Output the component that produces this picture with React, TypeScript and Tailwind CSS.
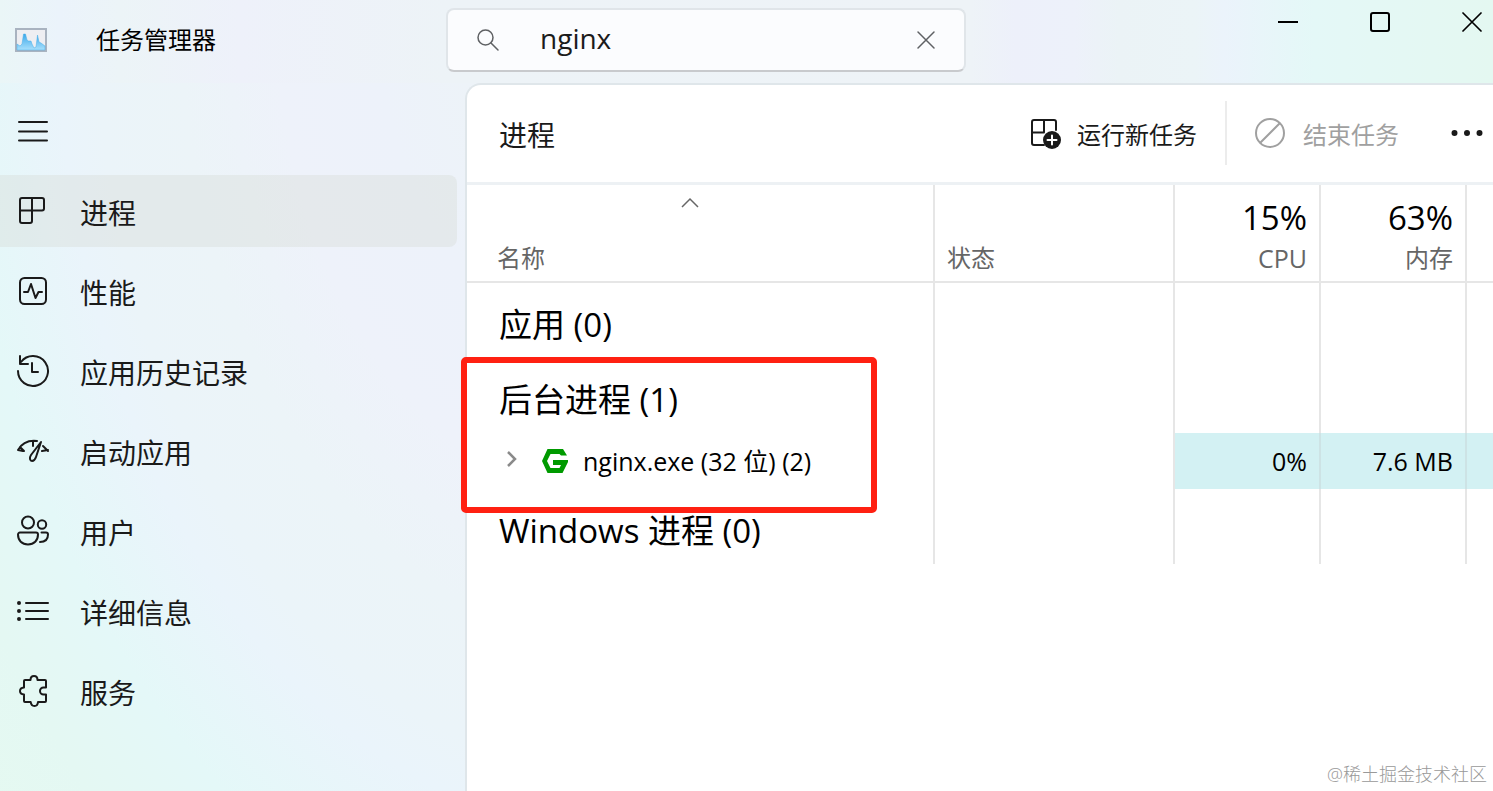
import type { ReactNode } from "react";

function Icon({
  size,
  label,
  className = "",
  children,
}: {
  size: number;
  label?: string;
  className?: string;
  children: ReactNode;
}) {
  return (
    <svg
      width={size}
      height={size}
      viewBox={`0 0 ${size} ${size}`}
      fill="none"
      stroke="currentColor"
      strokeWidth="2"
      strokeLinecap="round"
      strokeLinejoin="round"
      aria-hidden={label ? undefined : true}
      aria-label={label}
      className={`shrink-0 ${className}`}
    >
      {children}
    </svg>
  );
}

const navItems: { label: string; icon: ReactNode }[] = [
  {
    label: "进程",
    icon: (
      <path d="M6 3h20a2 2 0 0 1 2 2v8.500a2 2 0 0 1-2 2H4M4 15.500V5a2 2 0 0 1 2-2M4 15.500V26a2 2 0 0 0 2 2h8a2 2 0 0 0 2-2V3" />
    ),
  },
  {
    label: "性能",
    icon: (
      <>
        <rect x="4" y="3" width="26" height="26" rx="4.500" />
        <path d="M8 17h4l3-8 4.500 14 3-6H26" />
      </>
    ),
  },
  {
    label: "应用历史记录",
    icon: (
      <>
        <path d="M2 16a15 15 0 1 0 3-9" />
        <path d="M4 1v8h8M16 8v9h6" />
      </>
    ),
  },
  {
    label: "启动应用",
    icon: (
      <>
        <path d="M2 15C6 8 12 5 21 6M2 15l5 1M17 6v5M4 12l4 4M32 16l-5-5M32 15l-6 1" />
        <path d="M25 7L15 20c-2 3-1 6 1 6s3-1 4-4z" />
      </>
    ),
  },
  {
    label: "用户",
    icon: (
      <>
        <circle cx="12" cy="7.500" r="6" />
        <circle cx="26" cy="9.500" r="4.200" />
        <path d="M4 17.500h16a2 2 0 0 1 2 2c0 6-4 10-10 10S2 25.500 2 19.500a2 2 0 0 1 2-2z" />
        <path d="M25.500 17.500H30a2 2 0 0 1 2 2c0 5-3 7.500-8 7.500" />
      </>
    ),
  },
  {
    label: "详细信息",
    icon: (
      <>
        <path d="M10 8h22M10 16h22M10 24h22" />
        <path d="M3 8h0M3 16h0M3 24h0" strokeWidth="4" />
      </>
    ),
  },
  {
    label: "服务",
    icon: (
      <path d="M9 5h5.500c0-2.500 1.500-4 3.500-4s3.500 1.500 3.500 4H29a1 1 0 0 1 1 1v6.500h-2.500a3.500 3.500 0 0 0 0 7H30V26a1 1 0 0 1-1 1h-7c-.2 2.800-1.800 4-3.500 4S15 29.800 14.700 27H9a1 1 0 0 1-1-1v-6.500c-2.700-.2-4-1.600-4-3.500s1.300-3.300 4-3.500V6a1 1 0 0 1 1-1z" />
    ),
  },
];

function TitleBar() {
  return (
    <header className="flex h-[83px] items-start bg-[linear-gradient(90deg,#eaf6f7_0%,#ebf3fb_4%,#ecf4f7_8%,#eef1fa_16%,#edf3f7_30%,#eef3f7_65%,#edf0fa_68%,#edf1fa_72%,#ebf3f6_75%,#ebf4f7_80%,#ebf3fb_82%,#e4f8f7_88%,#e4f8f1_100%)]">
      <div className="flex h-20 w-[446px] shrink-0 items-center gap-[49px] pl-[15px]">
        <svg width="32" height="24" viewBox="0 0 32 24" aria-hidden="true" className="shrink-0">
          <defs>
            <linearGradient id="wave" x1="0" y1="0" x2="0" y2="1">
              <stop offset="0" stopColor="#3ba8ea" />
              <stop offset="1" stopColor="#a8e0fc" />
            </linearGradient>
          </defs>
          <rect x="1" y="1" width="30" height="22" fill="#eeeef2" stroke="#a9b3c0" strokeWidth="2" />
          <path
            d="M2 16l3 2 2-2 1.500-10h2l1.500 6 1.500 1H16l1 3 2 4 2-1 1.500-12 1.500 7 2 1 4 3V22H2z"
            fill="url(#wave)"
            stroke="#48aee8"
            strokeWidth="0.500"
          />
        </svg>
        <h1 className="text-2xl text-black">任务管理器</h1>
      </div>
      <label className="mt-2 flex h-16 w-[520px] shrink-0 items-center rounded-lg border-2 border-[#e0e5e9] border-b-[#c8cacd] bg-[#fbfcfe] pl-7 text-[#5f6164]">
        <Icon size={24} label="搜索">
          <circle cx="9.500" cy="9.500" r="7.500" strokeWidth="1.500" />
          <path d="M15 15l7 7" strokeWidth="1.500" />
        </Icon>
        <input
          type="text"
          defaultValue="nginx"
          aria-label="搜索"
          className="ml-10 h-10 min-w-0 flex-1 bg-transparent pb-1 text-[28px] leading-10 text-[#1b1b1b] outline-none"
        />
        <button type="button" aria-label="清除" className="mr-6 p-1">
          <Icon size={20}>
            <path d="M2 2l16 16M18 2L2 18" strokeWidth="1.500" />
          </Icon>
        </button>
      </label>
      <div className="ml-auto flex h-11 items-center text-black">
        <button type="button" aria-label="最小化" className="flex h-11 w-[92px] items-center justify-center">
          <Icon size={20}>
            <path d="M0 10h20" strokeLinecap="butt" />
          </Icon>
        </button>
        <button type="button" aria-label="最大化" className="flex h-11 w-[92px] items-center justify-center">
          <Icon size={20}>
            <rect x="1" y="1" width="18" height="18" rx="2" />
          </Icon>
        </button>
        <button type="button" aria-label="关闭" className="flex h-11 items-center pr-[11px] pl-9">
          <Icon size={20}>
            <path d="M1 1l18 18M19 1L1 19" strokeWidth="1.700" />
          </Icon>
        </button>
      </div>
    </header>
  );
}

function Sidebar() {
  return (
    <nav aria-label="导航" className="w-[465px] shrink-0 text-[#1a1a1a]">
      <button type="button" aria-label="展开导航" className="mt-8 mb-7 ml-4 block">
        <Icon size={32}>
          <path d="M3 7h28M3 16.500h28M3 25.500h28" />
        </Icon>
      </button>
      <ul className="flex flex-col gap-2 pr-2">
        {navItems.map((item, index) => (
          <li key={item.label}>
            <a
              href="#"
              aria-current={index === 0 ? "page" : undefined}
              className={`flex h-[72px] items-center gap-[30px] rounded-r-lg pl-4 ${
                index === 0 ? "bg-[#d8dcd8]/40" : ""
              }`}
            >
              <Icon size={34} className="mt-0.5">
                {item.icon}
              </Icon>
              <span className="pt-1 text-[28px] leading-10">{item.label}</span>
            </a>
          </li>
        ))}
      </ul>
    </nav>
  );
}

function Toolbar() {
  return (
    <div className="flex h-[100px] items-center border-b-[3px] border-[#edf1f4] pr-[10px] pb-0.5 pl-8 text-[#1a1a1a]">
      <h2 className="pt-1 text-[28px] leading-10">进程</h2>
      <button type="button" className="ml-auto flex items-center gap-[15px]">
        <Icon size={32}>
          <path d="M14 28H4a2 2 0 0 1-2-2V5a2 2 0 0 1 2-2h20a2 2 0 0 1 2 2v8M14 3v12M2 15.500h12" />
          <circle cx="22" cy="23" r="9" fill="currentColor" stroke="none" />
          <path d="M22 18.500v9M17.500 23h9" stroke="#fff" />
        </Icon>
        <span className="pt-1 text-2xl">运行新任务</span>
      </button>
      <span className="ml-7 h-16 w-0.5 bg-[#ececec]" />
      <button type="button" disabled className="ml-[27px] flex items-center gap-[17px] text-[#a0a0a0]">
        <Icon size={32}>
          <circle cx="16" cy="16" r="14" />
          <path d="M6.500 25.500l19-19" />
        </Icon>
        <span className="pt-1 text-2xl">结束任务</span>
      </button>
      <button type="button" aria-label="更多" className="ml-[52px]">
        <Icon size={32}>
          <path d="M3.500 16h0M16 16h0M28.500 16h0" strokeWidth="6" />
        </Icon>
      </button>
    </div>
  );
}

const cell = "border-r-2 border-[#e6e6e6] p-0";
const headCell = "border-r-2 border-b-2 border-[#e6e6e6] p-0 font-normal text-[#666]";
const heatCell = "border-r-2 border-[#cde3e5] bg-[#d3f1f3] p-0 pr-3 text-right text-[25px] leading-8";

function GroupRow({ title }: { title: string }) {
  return (
    <tr className="h-[75px]">
      <th
        scope="rowgroup"
        className="border-r-2 border-[#e6e6e6] p-0 pt-2 pl-8 text-left text-[33px] leading-10 font-normal"
      >
        {title}
      </th>
      <td className={cell} />
      <td className={cell} />
      <td className={cell} />
      <td className="p-0" />
    </tr>
  );
}

function ProcessTable() {
  return (
    <div className="relative">
      <table className="w-full table-fixed border-separate border-spacing-0 text-black">
        <colgroup>
          <col className="w-[468px]" />
          <col className="w-[240px]" />
          <col className="w-[146px]" />
          <col className="w-[146px]" />
          <col />
        </colgroup>
        <thead>
          <tr className="h-[98px]">
            <th scope="col" className={headCell} aria-sort="ascending">
              <div className="flex h-24 flex-col justify-between pt-2 pb-[3px]">
                <Icon size={20} className="mr-5 self-center">
                  <path d="M2 14l8-8 8 8" strokeWidth="1.500" strokeLinecap="butt" strokeLinejoin="miter" />
                </Icon>
                <span className="pl-[30px] text-left text-2xl leading-10">名称</span>
              </div>
            </th>
            <th scope="col" className={headCell}>
              <div className="flex h-24 flex-col justify-end pb-[3px] pl-3 text-left text-2xl leading-10">状态</div>
            </th>
            <th scope="col" className={headCell}>
              <div className="flex h-24 flex-col justify-end pr-3 pb-[3px] text-right">
                <span className="text-[33px] leading-10 text-black">15%</span>
                <span className="text-[25px] leading-10">CPU</span>
              </div>
            </th>
            <th scope="col" className={headCell}>
              <div className="flex h-24 flex-col justify-end pr-3 pb-[3px] text-right">
                <span className="text-[33px] leading-10 text-black">63%</span>
                <span className="text-2xl leading-10">内存</span>
              </div>
            </th>
            <td className="border-b-2 border-[#e6e6e6] p-0" />
          </tr>
        </thead>
        <tbody>
          <GroupRow title="应用 (0)" />
          <GroupRow title="后台进程 (1)" />
          <tr className="h-14">
            <td className={cell}>
              <div className="flex items-center pl-[37px]">
                <button type="button" aria-label="展开" className="pb-1 text-[#8a8a8a]">
                  <Icon size={16}>
                    <path d="M4 1l7 7-7 7" strokeWidth="2.500" strokeLinecap="butt" strokeLinejoin="miter" />
                  </Icon>
                </button>
                <svg width="26" height="24" viewBox="0 0 26 24" fill="#009a00" aria-hidden="true" className="ml-[22px]">
                  <path d="M5.500 0H21l4 6.500h-6L17.500 5h-9L5 12l3.500 7h9l1.500-3h-8v-5h15v2l-5.500 11h-15L0 12z" />
                </svg>
                <span className="ml-[15px] text-[25px] leading-8">nginx.exe (32 位) (2)</span>
              </div>
            </td>
            <td className={cell} />
            <td className={heatCell}>0%</td>
            <td className={heatCell}>7.6 MB</td>
            <td className="bg-[#d3f1f3] p-0" />
          </tr>
          <GroupRow title="Windows 进程 (0)" />
        </tbody>
      </table>
      <div className="pointer-events-none absolute top-[172px] -left-[6px] h-[156px] w-[416px] rounded-[5px] border-6 border-[#ff2012]" />
    </div>
  );
}

export default function App() {
  return (
    <div className="flex min-h-screen flex-col overflow-x-hidden bg-[radial-gradient(ellipse_560px_850px_at_600px_0px,#eef3f7_0%,#edf3f8_25%,#edf2fa_40%,#eef2fa_58%,#ecf4f8_75%,#ebf4f9_90%,#eaf4fb_97%,#e4f8f8_115%,#e4f8f3_130%,#e5f9f1_145%)] font-['Open_Sans','Noto_Sans_CJK_SC',sans-serif]">
      <TitleBar />
      <div className="flex flex-1">
        <Sidebar />
        <main className="flex min-w-0 flex-1 flex-col rounded-tl-2xl border-t-2 border-l-2 border-[#dfe6ea] bg-white">
          <Toolbar />
          <ProcessTable />
          <footer className="mt-auto pr-[6px] pb-[5px] text-right text-lg leading-6 font-light text-[#999]">
            @稀土掘金技术社区
          </footer>
        </main>
      </div>
    </div>
  );
}
